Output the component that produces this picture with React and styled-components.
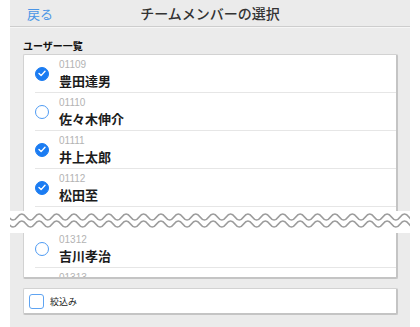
import React from "react";
import styled, { createGlobalStyle } from "styled-components";

const GlobalStyle = createGlobalStyle`
  * { box-sizing: border-box; }
  body {
    margin: 0;
    background: #ffffff;
    font-family: "Noto Sans CJK JP", "Liberation Sans", sans-serif;
  }
`;

const users = [
  { code: "01109", name: "豊田達男", checked: true },
  { code: "01110", name: "佐々木伸介", checked: false },
  { code: "01111", name: "井上太郎", checked: true },
  { code: "01112", name: "松田至", checked: true },
];

const later = [
  { code: "01312", name: "吉川孝治", checked: false },
  { code: "01313", name: "", checked: false },
];

const Page = styled.div`
  position: relative;
  width: 400px;
  height: 327px;
  margin: 0 10px;
  background: #ebebeb;
  overflow: hidden;
`;

const Header = styled.header`
  height: 27px;
  display: grid;
  grid-template-columns: 1fr auto 1fr;
  align-items: center;
  padding: 0 17px;
  border-bottom: 1px solid #cdcdcd;
  box-shadow: 0 1px 0 #f6f6f6;
`;

const Back = styled.span`
  font-size: 13px;
  color: #4a95e6;
`;

const Title = styled.h1`
  margin: 0;
  font-size: 14px;
  font-weight: 500;
  color: #333;
`;

const Content = styled.main`
  padding: 12px 12px 0 13px;
`;

const SectionLabel = styled.div`
  font-size: 10px;
  font-weight: 700;
  color: #111;
  line-height: 14px;
  margin-bottom: 1px;
`;

const ListBox = styled.div`
  height: 225px;
  background: #fff;
  border: 1px solid #d2d2d2;
  border-right: 2px solid #c4c4c4;
  border-bottom: 2px solid #c4c4c4;
  border-radius: 2px;
  overflow: hidden;
`;

const Row = styled.div`
  height: 38px;
  margin-left: 11px;
  display: flex;
  align-items: center;
  gap: 10px;
  border-bottom: 1px solid #e6e6e6;
`;

const CutGap = styled.div`
  height: 23px;
`;

const Mark = styled.span`
  width: 14px;
  height: 14px;
  border-radius: 50%;
  flex: none;
  display: flex;
  align-items: center;
  justify-content: center;
  background: ${(p) => (p.$on ? "#1b7cf2" : "#fff")};
  border: 1.5px solid ${(p) => (p.$on ? "#1b7cf2" : "#4f9bf3")};
`;

const Info = styled.div`
  display: flex;
  flex-direction: column;
  align-self: flex-start;
  padding-top: 4px;
`;

const Code = styled.span`
  font-family: "Liberation Sans", sans-serif;
  font-size: 10px;
  line-height: 12px;
  color: #b3b3b3;
`;

const Name = styled.span`
  font-size: 13px;
  font-weight: 700;
  line-height: 18px;
  color: #1c1c1c;
  margin-top: 1px;
`;

const FilterBox = styled.label`
  margin-top: 9px;
  height: 27px;
  display: flex;
  align-items: center;
  gap: 6px;
  padding-left: 5px;
  background: #fff;
  border: 1px solid #d2d2d2;
  border-right: 2px solid #c4c4c4;
  border-bottom: 2px solid #c4c4c4;
  border-radius: 2px;
`;

const Square = styled.span`
  width: 15px;
  height: 15px;
  border: 1.5px solid #5fa4f2;
  border-radius: 3px;
`;

const FilterText = styled.span`
  font-size: 9px;
  color: #222;
`;

const Break = styled.svg`
  position: absolute;
  left: -10px;
  top: 211px;
  display: block;
`;

function wavePath(cy, amp, period, width) {
  let d = `M ${-period} ${cy}`;
  let x = -period;
  let up = true;
  while (x < width + period) {
    const h = period / 2;
    d += ` Q ${x + h / 2} ${up ? cy - amp * 2 : cy + amp * 2} ${x + h} ${cy}`;
    x += h;
    up = !up;
  }
  return d;
}

const Check = () => (
  <svg width="8" height="7" viewBox="0 0 8 7">
    <path d="M1 3.6 L3.1 5.6 L7 1.2" fill="none" stroke="#fff" strokeWidth="1.4" strokeLinecap="round" strokeLinejoin="round" />
  </svg>
);

const UserRow = ({ code, name, checked }) => (
  <Row>
    <Mark $on={checked}>{checked && <Check />}</Mark>
    <Info>
      <Code>{code}</Code>
      {name && <Name>{name}</Name>}
    </Info>
  </Row>
);

export default function App() {
  return (
    <>
      <GlobalStyle />
      <Page>
        <Header>
          <Back>戻る</Back>
          <Title>チームメンバーの選択</Title>
          <span />
        </Header>
        <Content>
          <SectionLabel>ユーザー一覧</SectionLabel>
          <ListBox>
            {users.map((u) => (
              <UserRow key={u.code} {...u} />
            ))}
            <CutGap />
            {later.map((u) => (
              <UserRow key={u.code} {...u} />
            ))}
          </ListBox>
          <FilterBox>
            <Square />
            <FilterText>絞込み</FilterText>
          </FilterBox>
        </Content>
        <Break width="420" height="22" viewBox="0 0 420 22">
          <rect width="420" height="22" fill="#fff" />
          <path d={wavePath(6, 3, 17.4, 420)} fill="none" stroke="#9c9c9c" strokeWidth="1.6" />
          <path d={wavePath(13, 3, 17.4, 420)} fill="none" stroke="#9c9c9c" strokeWidth="1.6" />
        </Break>
      </Page>
    </>
  );
}
